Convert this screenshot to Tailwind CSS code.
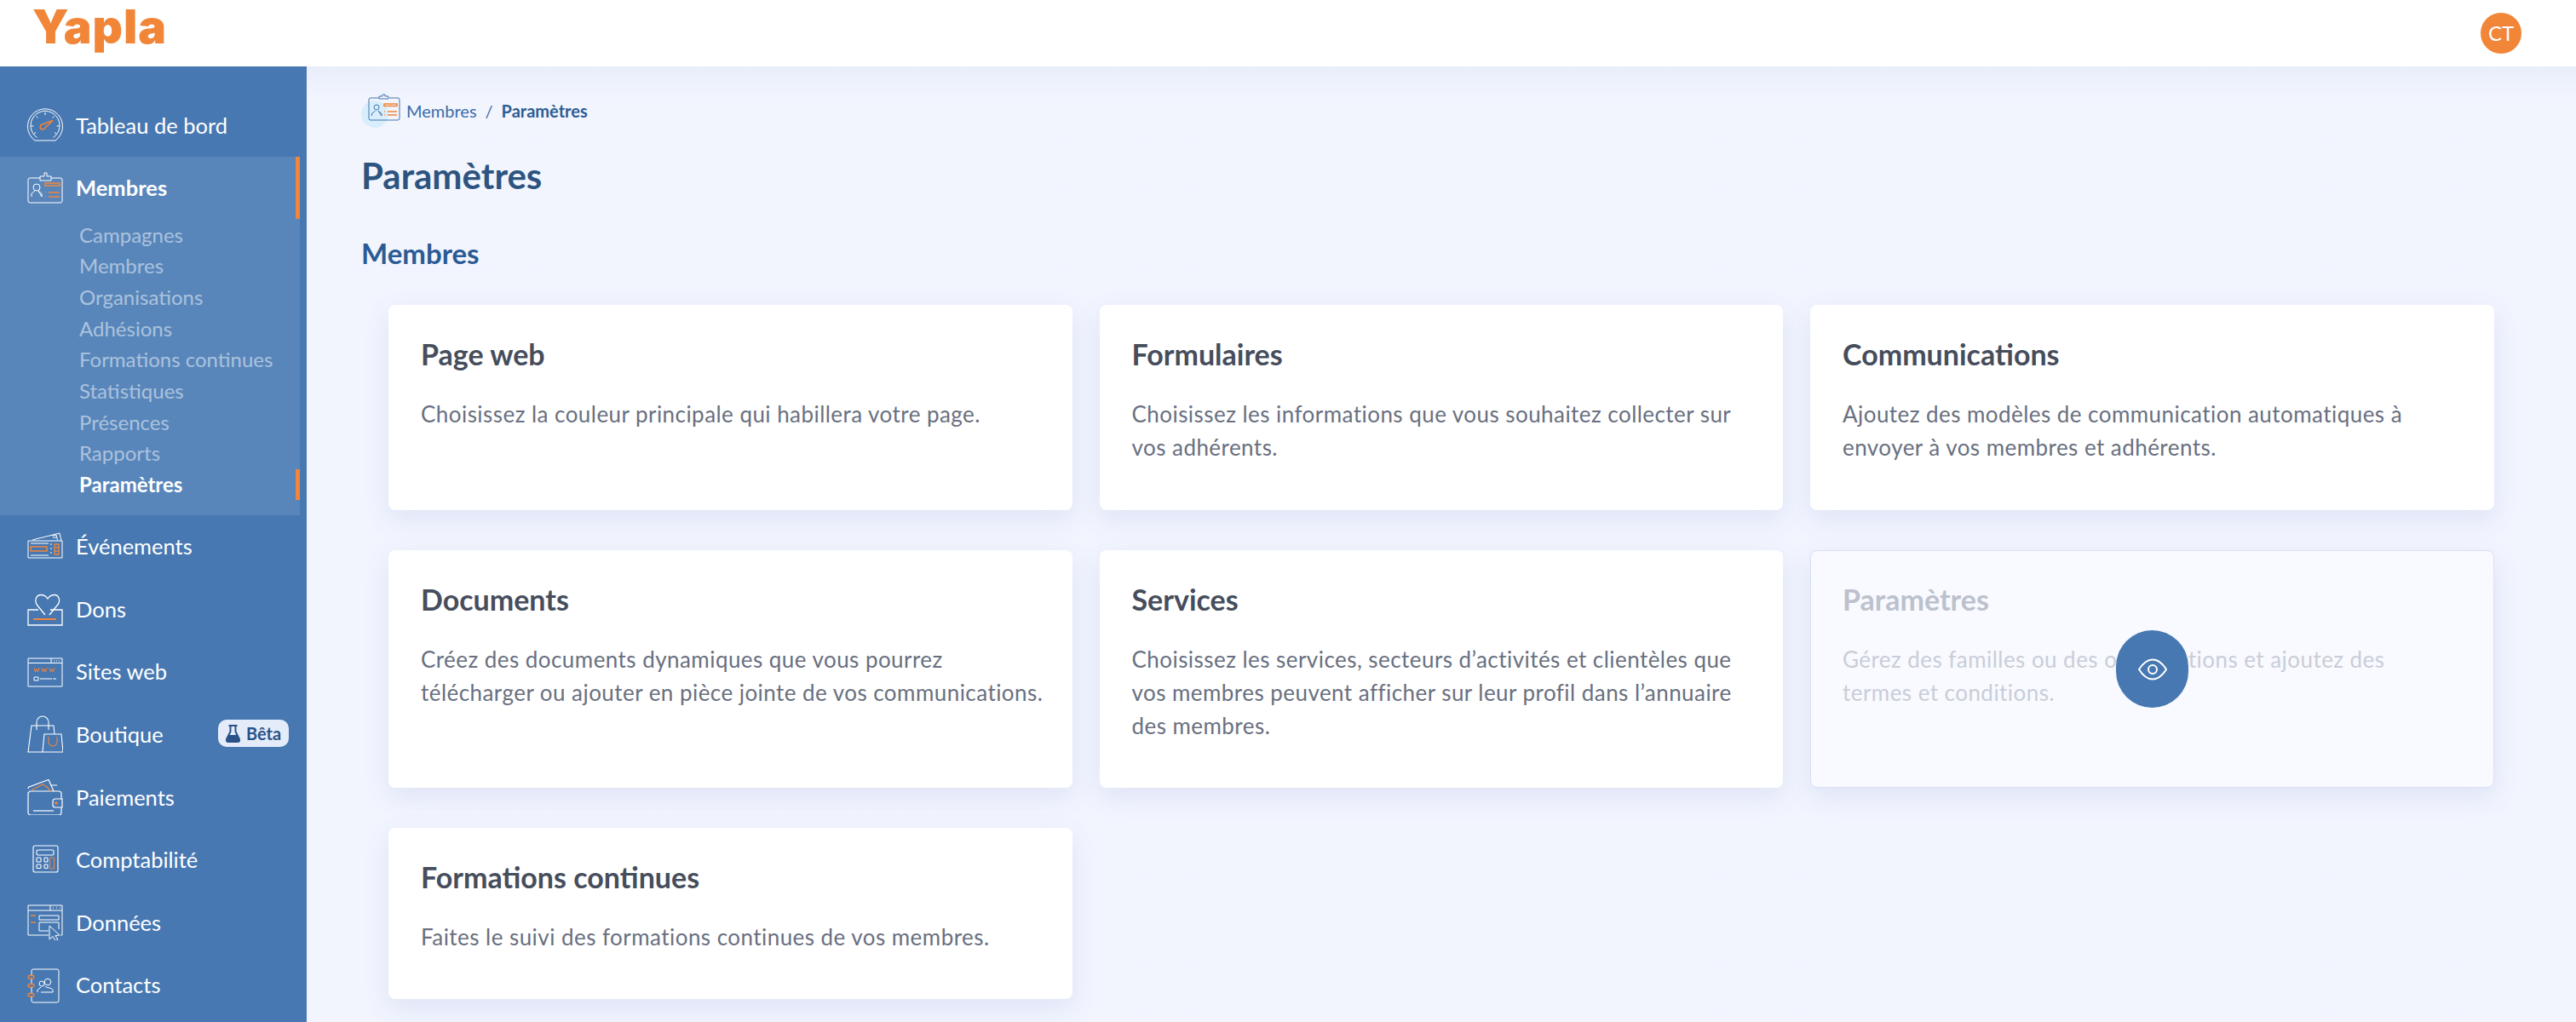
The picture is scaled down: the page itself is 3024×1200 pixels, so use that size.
<!DOCTYPE html>
<html lang="fr">
<head>
  <meta charset="UTF-8" />
  <title>Yapla - Paramètres</title>
  <script src="https://cdn.jsdelivr.net/npm/@tailwindcss/browser@4"></script>
</head>
<body class="h-[1200px] overflow-hidden bg-[#f2f5fe] font-['Lato','Noto_Sans',sans-serif]">
  <header class="h-[78px] bg-white flex items-center justify-between pl-[38px] pr-[64px] relative z-10">
    <span class="text-[#f18538] text-[55px] leading-none font-black tracking-[1px] font-['Inter',sans-serif] -mt-[15px]">Yapla</span>
    <div class="w-[48px] h-[48px] rounded-full bg-[#f18538] text-white text-[24px] flex items-center justify-center">CT</div>
  </header>

  <div class="flex h-[1122px]">
    <!-- sidebar -->
    <aside class="w-[360px] shrink-0 bg-[#4778b2] pt-[32px] text-white text-[25.500px]">
      <a class="flex items-center h-[73.600px] pl-[32px] gap-[15px]">
        <svg class="w-[42px] h-[42px] shrink-0" viewBox="0 0 42 42" fill="none" stroke="#fff" stroke-width="1"><path d="M9 39a20.500 20.500 0 1 1 24 0Z"/><path d="M11.500 35.500a17 17 0 1 1 19 0"/><path d="M21 6v3M10.500 10.500l2 2M31.500 10.500l-2 2M4.500 22h3M34.500 22h3M8 31l2-1.500M34 31l-2-1.500" /><path d="M18 20l12-4.500-9 8.500a3 3 0 1 1-3-4Z" stroke="#f18538" stroke-width="1.500"/></svg>
        <span>Tableau de bord</span>
      </a>

      <div class="w-[352px] bg-[#5886bb] h-[421px]">
        <a class="flex items-center h-[73.600px] pl-[32px] gap-[15px] font-bold border-r-[5px] border-[#f18538]">
          <svg class="w-[42px] h-[42px] shrink-0" viewBox="0 0 42 42" fill="none" stroke="#fff" stroke-width="1"><path d="M15 10H3a2 2 0 0 0-2 2v25a2 2 0 0 0 2 2h36a2 2 0 0 0 2-2V12a2 2 0 0 0-2-2H28"/><path d="M15 13V8h5V4h3v4h5v5Z"/><circle cx="11" cy="21" r="4"/><path d="M5 32v-3c0-2 3-2.500 4-4M13 25c1 1.500 4 2 4 4v3Z"/><path d="M21 16h17v3H21ZM25 27h13M25 32h13" stroke="#f18538" stroke-width="1.500"/><path d="M21 27h1M21 32h1" stroke="#f18538" stroke-width="1.500"/></svg>
          <span>Membres</span>
        </a>
        <ul class="pl-[93px] text-[24px] text-white/50">
          <li class="h-[36.700px] flex items-center">Campagnes</li>
          <li class="h-[36.700px] flex items-center">Membres</li>
          <li class="h-[36.700px] flex items-center">Organisations</li>
          <li class="h-[36.700px] flex items-center">Adhésions</li>
          <li class="h-[36.700px] flex items-center">Formations continues</li>
          <li class="h-[36.700px] flex items-center">Statistiques</li>
          <li class="h-[36.700px] flex items-center">Présences</li>
          <li class="h-[36.700px] flex items-center">Rapports</li>
          <li class="h-[36.700px] flex items-center -ml-[93px] pl-[93px] text-white font-bold border-r-[5px] border-[#f18538]">Paramètres</li>
        </ul>
      </div>

      <a class="flex items-center h-[73.600px] pl-[32px] gap-[15px]">
        <svg class="w-[42px] h-[42px] shrink-0" viewBox="0 0 42 42" fill="none" stroke="#fff" stroke-width="1"><path d="M1 15h40v20H1Z"/><path d="M6 14l20-5M26 9l12-3 2 9M29 9l5-1 1.500 6M30 11h4"/><path d="M4 18h21M4 32h21"/><path d="M4 22h19v5H4Z" stroke="#f18538" stroke-width="1.500"/><path d="M28 18v2M28 23v2M28 28v2" /><path d="M32 19h5v12h-5ZM32 23h5M32 27h5" stroke="#f18538" stroke-width="1.300"/></svg>
        <span>Événements</span>
      </a>
      <a class="flex items-center h-[73.600px] pl-[32px] gap-[15px]">
        <svg class="w-[42px] h-[42px] shrink-0" viewBox="0 0 42 42" fill="none" stroke="#fff" stroke-width="1.300"><path d="M13 22H1v18h40V22H27"/><path d="M21 28L12 17C8 12 10 4.500 16 4.500 19 4.500 22 6 24 9 26 6 29 4.500 32 4.500 37 4.500 40 12 35 17L26 28"/><path d="M7 33h27" stroke="#f18538" stroke-width="2"/></svg>
        <span>Dons</span>
      </a>
      <a class="flex items-center h-[73.600px] pl-[32px] gap-[15px]">
        <svg class="w-[42px] h-[42px] shrink-0" viewBox="0 0 42 42" fill="none" stroke="#fff" stroke-width="1"><path d="M1 5h40v33H1Z"/><path d="M1 10.500h40M28 5v5.500"/><path d="M31 8h1M34 8h1M37 8h1"/><path d="M8 16l1.500 5 1.500-3.500 1.500 3.500 1.500-5M17 16l1.500 5 1.500-3.500 1.500 3.500 1.500-5M26 16l1.500 5 1.500-3.500 1.500 3.500 1.500-5" stroke="#f18538"/><path d="M8 27h5v4H8ZM15 29h14M30 29h4"/></svg>
        <span>Sites web</span>
      </a>
      <a class="flex items-center h-[73.600px] pl-[32px] gap-[15px] relative">
        <svg class="w-[42px] h-[46px] shrink-0" viewBox="0 0 42 46" fill="none" stroke="#fff" stroke-width="1.100"><path d="M18 44H1L5 13h26l1 10"/><path d="M11 18V9a7 7 0 0 1 14 0v9"/><path d="M20 23h20l2 21H18Z"/><path d="M25 26v6a5 5 0 0 0 10 0v-6" stroke="#f18538"/></svg>
        <span>Boutique</span>
        <span class="absolute left-[256px] top-[20px] h-[32px] w-[83px] rounded-[10px] bg-[#e5ecf9] text-[#2a5288] text-[20px] font-bold flex items-center justify-center gap-[7px]">
          <svg class="w-[17px] h-[21px]" viewBox="0 0 17 21"><path d="M3.500 1h10M5.500 1v7L1 17c-.7 1.700.5 3 2 3h11c1.500 0 2.700-1.300 2-3l-4.500-9V1" fill="none" stroke="#2a5288" stroke-width="2"/><path d="M3.500 12h10l3 8H.5Z" fill="#2a5288"/></svg>
          Bêta
        </span>
      </a>
      <a class="flex items-center h-[73.600px] pl-[32px] gap-[15px]">
        <svg class="w-[42px] h-[42px] shrink-0" viewBox="0 0 42 42" fill="none" stroke="#fff" stroke-width="1.200"><path d="M3 14h34a3 3 0 0 1 3 3v22a3 3 0 0 1-3 3H4a3 3 0 0 1-3-3V16Z"/><path d="M1 11a3 3 0 0 1 1-2L25 .5 31 14M28 7h7"/><path d="M33 23h8v10h-8a3 3 0 0 1-3-3v-4a3 3 0 0 1 3-3Z" fill="#4778b2"/><path d="M7 37h24"/><path d="M5 13l13-7 5 3 5 5" stroke="#f18538"/><circle cx="34" cy="28" r="1.700" fill="#f18538" stroke="none"/></svg>
        <span>Paiements</span>
      </a>
      <a class="flex items-center h-[73.600px] pl-[32px] gap-[15px]">
        <svg class="w-[42px] h-[42px] shrink-0" viewBox="0 0 42 42" fill="none" stroke="#fff" stroke-width="1.100"><rect x="7" y="5" width="29" height="31" rx="2"/><rect x="11" y="10" width="20" height="6" rx="1.500"/><rect x="11" y="19" width="5" height="5" rx="1"/><rect x="20" y="19" width="4" height="5" rx="1"/><rect x="11" y="27" width="5" height="4.500" rx="1"/><rect x="20" y="27" width="4" height="4.500" rx="1"/><rect x="26.500" y="19" width="5" height="13" rx="1" stroke="#f18538"/></svg>
        <span>Comptabilité</span>
      </a>
      <a class="flex items-center h-[73.600px] pl-[32px] gap-[15px]">
        <svg class="w-[42px] h-[42px] shrink-0" viewBox="0 0 42 42" fill="none" stroke="#fff" stroke-width="1"><path d="M25 36H1V1h40v35h-2"/><path d="M1 7h40M27 1v6"/><path d="M30 4h1M34 4h1M38 4h1"/><path d="M14 13h23v5H14ZM14 21h23v8M14 21v10h11"/><path d="M4 13h6M4 21h6" stroke="#f18538" stroke-width="1.300"/><path d="M26 25l12 11-5 .5 3 5-3 1-3-5-4 3.500Z" fill="#4778b2"/></svg>
        <span>Données</span>
      </a>
      <a class="flex items-center h-[73.600px] pl-[32px] gap-[15px]">
        <svg class="w-[42px] h-[42px] shrink-0" viewBox="0 0 42 42" fill="none" stroke="#fff" stroke-width="1"><path d="M7 2h28a2 2 0 0 1 2 2v35a2 2 0 0 1-2 2H7a2 2 0 0 1-2-2V4a2 2 0 0 1 2-2Z"/><rect x="1" y="9.500" width="7" height="3.500" rx="1.500" fill="#4778b2" stroke="#f18538" stroke-width="1.300"/><rect x="1" y="19.500" width="7" height="3.500" rx="1.500" fill="#4778b2" stroke="#f18538" stroke-width="1.300"/><rect x="1" y="30.500" width="7" height="3.500" rx="1.500" fill="#4778b2" stroke="#f18538" stroke-width="1.300"/><circle cx="17" cy="19" r="3"/><circle cx="24" cy="17" r="3.800"/><path d="M12 29v-2c0-2 3-2 4-4M21 22c0 2 9 1.500 9 4.500V29H16"/></svg>
        <span>Contacts</span>
      </a>
    </aside>

    <!-- main -->
    <main class="flex-1 relative pl-[64px] bg-gradient-to-b from-[#e9eefb] from-0% to-[#f2f5fe] to-[40px] bg-no-repeat">
      <nav class="pt-[28px] h-[76px] flex items-center text-[20px] text-[#3a6ca8]">
        <span class="relative w-[46px] h-[40px] mr-[7px]">
          <span class="absolute left-0 bottom-0 w-[32px] h-[32px] rounded-full bg-[#d8eefc]"></span>
          <svg class="absolute left-[8px] top-0 w-[38px] h-[32px]" viewBox="0 0 38 32" fill="none" stroke="#4474ab" stroke-width="1"><path d="M13 5H3a2 2 0 0 0-2 2v22a2 2 0 0 0 2 2h32a2 2 0 0 0 2-2V7a2 2 0 0 0-2-2H25"/><path d="M13 6V3h4V1h3v2h4v3Z"/><circle cx="10" cy="16" r="3"/><path d="M4.500 26v-2c0-2 3-2 4-4M12 20c1 2 4 2 4 4v2Z"/><path d="M19 12h15v2.500H19ZM23 21h11M23 25h11M19 21h1M19 25h1" stroke="#f18538" stroke-width="1.500"/></svg>
        </span>
        <span>Membres</span>
        <span class="mx-[10px]">/</span>
        <span class="font-bold text-[#2d5c94]">Paramètres</span>
      </nav>
      <h1 class="text-[42px] font-bold leading-[40px] text-[#2d5480] mt-[32px]">Paramètres</h1>
      <h2 class="text-[33px] font-bold leading-[31px] text-[#2b5b94] mt-[56px]">Membres</h2>

      <div class="grid grid-cols-[802.500px_802.500px_802.500px] gap-x-[32px] mt-[45px] ml-[32px]">
        <section class="h-[241px] bg-white rounded-[8px] shadow-[0_10px_30px_rgba(70,100,190,0.12)] px-[38px] pt-[37px] text-[#697080] text-[26px] tracking-[0.45px] leading-[39px]">
          <h3 class="text-[34px] font-bold tracking-normal text-[#464d5c] leading-[42px] mb-[30px]">Page web</h3>
          <p>Choisissez la couleur principale qui habillera votre page.</p>
        </section>
        <section class="h-[241px] bg-white rounded-[8px] shadow-[0_10px_30px_rgba(70,100,190,0.12)] px-[38px] pt-[37px] text-[#697080] text-[26px] tracking-[0.45px] leading-[39px]">
          <h3 class="text-[34px] font-bold tracking-normal text-[#464d5c] leading-[42px] mb-[30px]">Formulaires</h3>
          <p>Choisissez les informations que vous souhaitez collecter sur vos adhérents.</p>
        </section>
        <section class="h-[241px] bg-white rounded-[8px] shadow-[0_10px_30px_rgba(70,100,190,0.12)] px-[38px] pt-[37px] text-[#697080] text-[26px] tracking-[0.45px] leading-[39px]">
          <h3 class="text-[34px] font-bold tracking-normal text-[#464d5c] leading-[42px] mb-[30px]">Communications</h3>
          <p>Ajoutez des modèles de communication automatiques à envoyer à vos membres et adhérents.</p>
        </section>

        <section class="h-[279px] mt-[47px] bg-white rounded-[8px] shadow-[0_10px_30px_rgba(70,100,190,0.12)] pl-[38px] pr-[14px] pt-[37px] text-[#697080] text-[26px] tracking-[0.45px] leading-[39px]">
          <h3 class="text-[34px] font-bold tracking-normal text-[#464d5c] leading-[42px] mb-[30px]">Documents</h3>
          <p>Créez des documents dynamiques que vous pourrez télécharger ou ajouter en pièce jointe de vos communications.</p>
        </section>
        <section class="h-[279px] mt-[47px] bg-white rounded-[8px] shadow-[0_10px_30px_rgba(70,100,190,0.12)] px-[38px] pt-[37px] text-[#697080] text-[26px] tracking-[0.45px] leading-[39px]">
          <h3 class="text-[34px] font-bold tracking-normal text-[#464d5c] leading-[42px] mb-[30px]">Services</h3>
          <p>Choisissez les services, secteurs d’activités et clientèles que vos membres peuvent afficher sur leur profil dans l’annuaire des membres.</p>
        </section>
        <section class="h-[279px] mt-[47px] relative bg-[#f8faff] border border-[#dbe1f1] rounded-[8px] shadow-[0_10px_30px_rgba(70,100,190,0.12)] pl-[37px] pr-[80px] pt-[36px] text-[#c9cdd8] text-[26px] tracking-[0.45px] leading-[39px]">
          <h3 class="text-[34px] font-bold tracking-normal text-[#bcc1cd] leading-[42px] mb-[30px]">Paramètres</h3>
          <p>Gérez des familles ou des organisations et ajoutez des termes et conditions.</p>
          <div class="absolute left-[358px] top-[93px] w-[85px] h-[91px] rounded-full bg-[#4778b2] flex items-center justify-center">
            <svg class="w-[34px] h-[26px]" viewBox="0 0 34 26" fill="none" stroke="#fff" stroke-width="2"><path d="M1 13C6 5 11 1.500 17 1.500S28 5 33 13c-5 8-10 11.500-16 11.500S6 21 1 13Z"/><circle cx="17" cy="13" r="5"/></svg>
          </div>
        </section>

        <section class="h-[201px] mt-[47px] bg-white rounded-[8px] shadow-[0_10px_30px_rgba(70,100,190,0.12)] px-[38px] pt-[37px] text-[#697080] text-[26px] tracking-[0.45px] leading-[39px]">
          <h3 class="text-[34px] font-bold tracking-normal text-[#464d5c] leading-[42px] mb-[30px]">Formations continues</h3>
          <p>Faites le suivi des formations continues de vos membres.</p>
        </section>
      </div>
    </main>
  </div>
</body>
</html>
